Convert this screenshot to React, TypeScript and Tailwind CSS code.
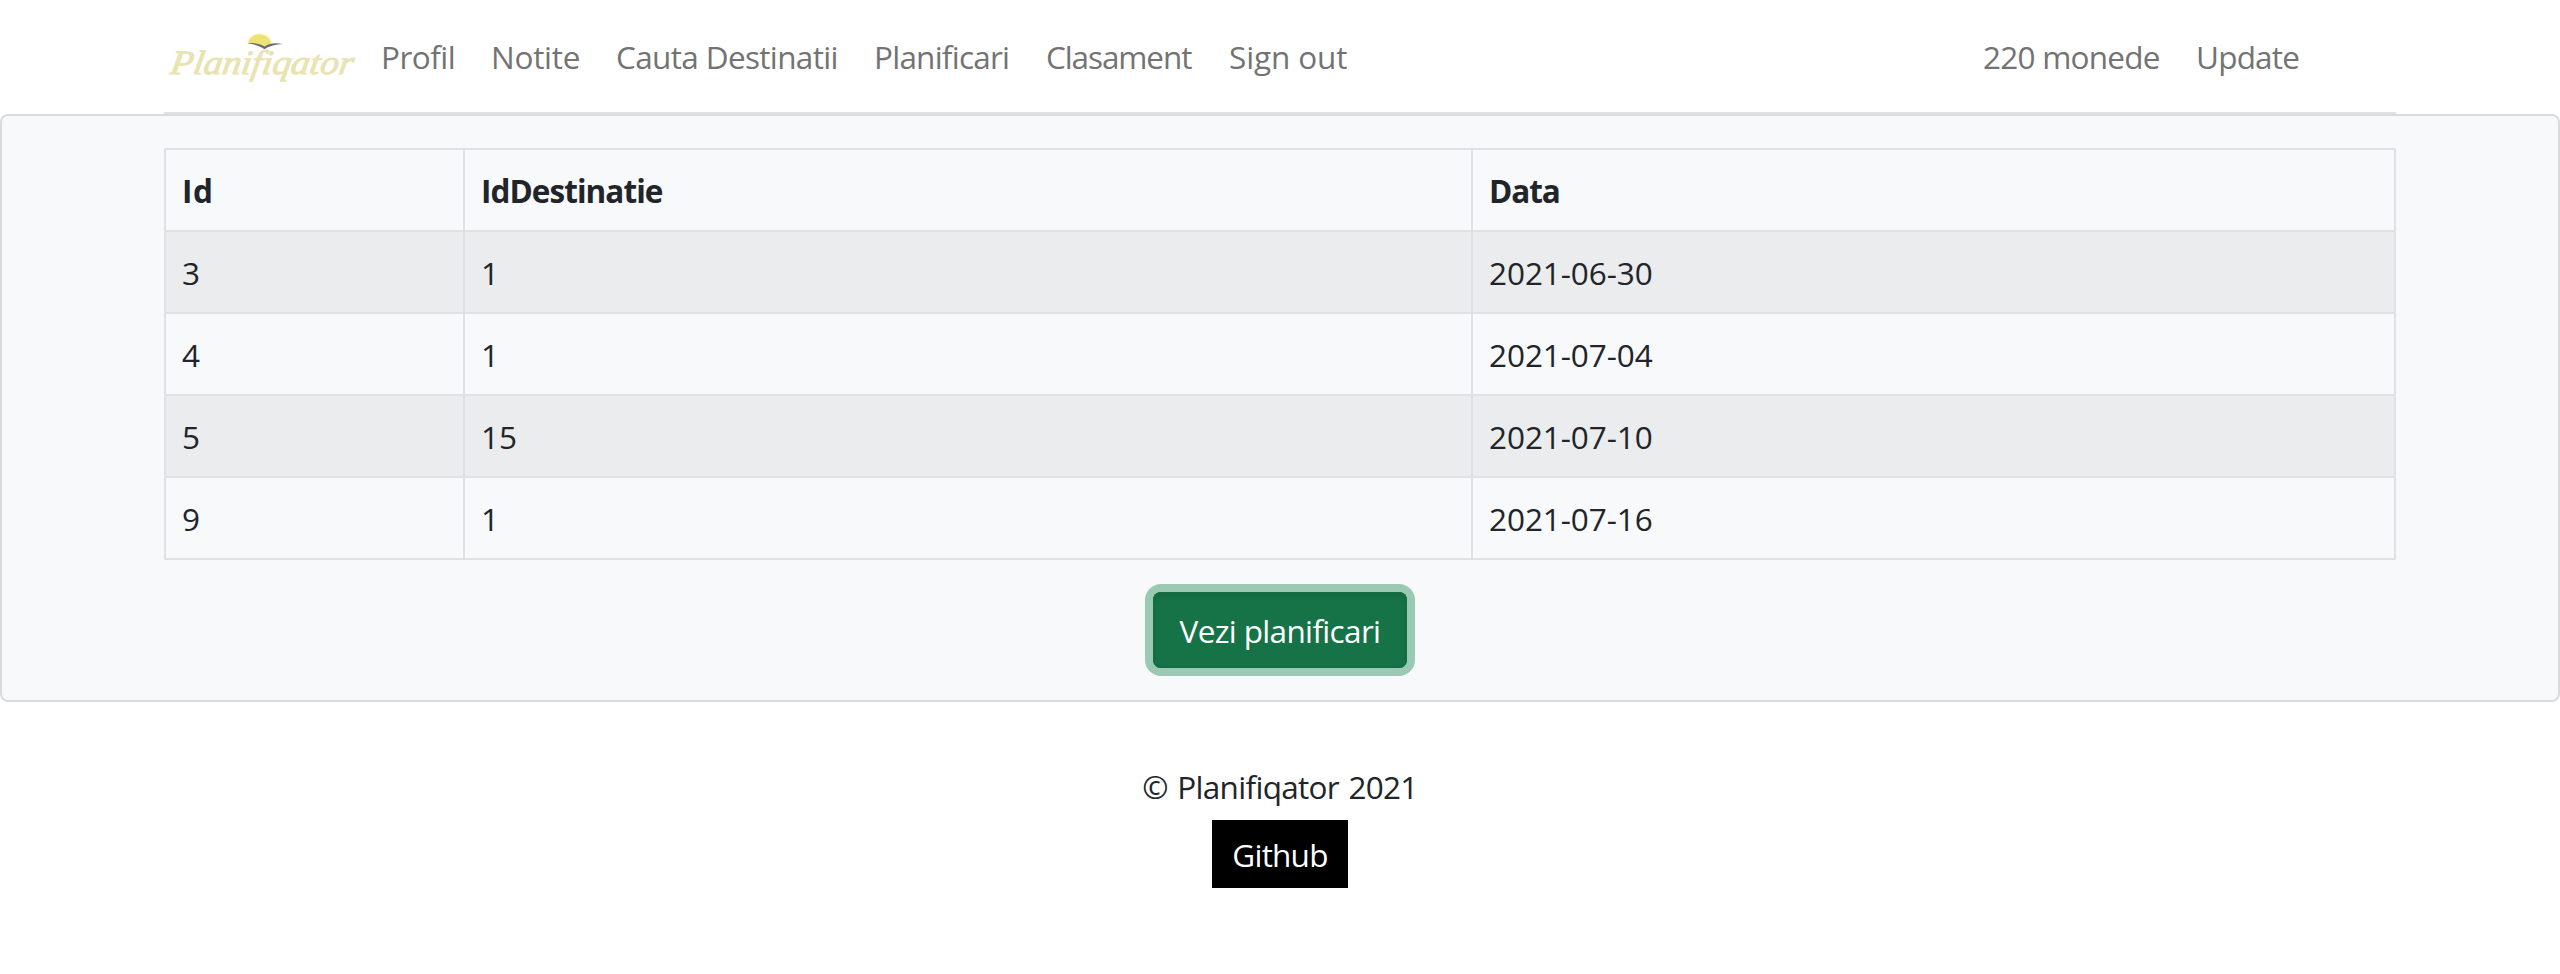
type Item = { label: string; box: string; tracking: string };

const leftLinks: Item[] = [
  { label: "Profil", box: "w-[110px]", tracking: "tracking-[-0.5px]" },
  { label: "Notite", box: "w-[125px]", tracking: "tracking-[-0.26px]" },
  { label: "Cauta Destinatii", box: "w-[258px]", tracking: "tracking-[-0.65px]" },
  { label: "Planificari", box: "w-[172px]", tracking: "tracking-[-0.76px]" },
  { label: "Clasament", box: "w-[183px]", tracking: "tracking-[-1.1px]" },
  { label: "Sign out", box: "w-[154px]", tracking: "tracking-[-0.13px]" },
];

const rightLinks: Item[] = [
  { label: "220 monede", box: "w-[213px]", tracking: "tracking-[-0.77px]" },
  { label: "Update", box: "w-[200px]", tracking: "tracking-[-0.8px]" },
];

const rows = [
  ["3", "1", "2021-06-30"],
  ["4", "1", "2021-07-04"],
  ["5", "15", "2021-07-10"],
  ["9", "1", "2021-07-16"],
];

function Logo() {
  return (
    <svg width="217" height="112" viewBox="164 0 217 112" role="img" aria-label="Planifiqator" className="shrink-0">
      <defs>
        <radialGradient id="glow">
          <stop offset="0.75" stopColor="#f3ee9a" stopOpacity="0.6" />
          <stop offset="1" stopColor="#f3ee9a" stopOpacity="0" />
        </radialGradient>
      </defs>
      <ellipse cx="259.5" cy="43" rx="13.5" ry="11" fill="url(#glow)" clipPath="inset(0 0 10px 0)" />
      <path d="M248 43.5 C248.5 38 253.5 34.5 259.3 34.5 C265.5 34.5 270.5 38.5 271 43.6 C268.5 44 266.5 45 264.7 47 C260 44.5 254 43.5 248 43.5 Z" fill="#ece373" />
      <path d="M247.5 43 C255 42.6 261.5 44.2 264.6 46.4 C269 43.3 276 42.6 283 44.2 C275.5 44.4 269.5 45.6 264.6 49.2 C259.5 45.8 254 44.2 247.5 43 Z" fill="#6c6a6e" />
      <text
        x="169"
        y="74"
        textLength="183"
        lengthAdjust="spacingAndGlyphs"
        transform="translate(12 0) skewX(-9)"
        strokeWidth="0.9"
        className="fill-[#e9e3b2] stroke-[#e9e3b2] font-['Liberation_Serif',serif] text-[34px] italic"
      >
        Planifiqator
      </text>
    </svg>
  );
}

function NavList({ items }: { items: Item[] }) {
  return (
    <ul className="flex pt-[33px]">
      {items.map((item) => (
        <li key={item.label} className={`${item.box} shrink-0`}>
          <a className={`${item.tracking} whitespace-nowrap text-[#737373]`}>{item.label}</a>
        </li>
      ))}
    </ul>
  );
}

export default function App() {
  return (
    <div className="min-h-[974px] bg-white font-['Open_Sans','Noto_Sans',sans-serif] text-[31.5px] leading-[48px] text-[#212529]">
      <header className="mx-[164px] flex h-[114px] border-b-2 border-[#dee2e6]">
        <Logo />
        <NavList items={leftLinks} />
        <div className="ml-auto">
          <NavList items={rightLinks} />
        </div>
      </header>

      <main className="h-[588px] rounded-lg border-2 border-[#d9dbdc] bg-[#f8f9fa] px-[162px] pt-8">
        <table className="w-full table-fixed border-collapse text-left">
          <colgroup>
            <col className="w-[299px]" />
            <col className="w-[1008px]" />
            <col />
          </colgroup>
          <thead>
            <tr className="h-[82px]">
              <th className="border-2 border-[#dee2e6] px-4 pt-[17px] pb-[15px] font-bold tracking-[0.6px]">Id</th>
              <th className="border-2 border-[#dee2e6] px-4 pt-[17px] pb-[15px] font-bold tracking-[-0.95px]">IdDestinatie</th>
              <th className="border-2 border-[#dee2e6] px-4 pt-[17px] pb-[15px] font-bold tracking-[-1.1px]">Data</th>
            </tr>
          </thead>
          <tbody>
            {rows.map((row) => (
              <tr key={row[0]} className="h-[82px] odd:bg-[#ebeced]">
                {row.map((cell, i) => (
                  <td key={i} className="border-2 border-[#dee2e6] px-4 pt-[17px] pb-[15px] tracking-[-0.07px]">
                    {cell}
                  </td>
                ))}
              </tr>
            ))}
          </tbody>
        </table>
        <div className="mt-8 flex justify-center">
          <button className="h-[76px] w-[254px] rounded-lg bg-[#157347] pt-px leading-[48px] tracking-[-0.66px] whitespace-nowrap text-white shadow-[inset_0_0_0_2px_#146c43,inset_0_3px_6px_rgba(0,0,0,0.125),0_0_0_8px_#9bcab4]">
            Vezi planificari
          </button>
        </div>
      </main>

      <footer className="flex flex-col items-center pt-[61px]">
        <p className="tracking-[-0.7px] [word-spacing:2px]">© Planifiqator 2021</p>
        <a className="mt-[9px] h-[68px] w-[136px] bg-black pt-[11px] text-center tracking-[-0.78px] text-white">Github</a>
      </footer>
    </div>
  );
}
